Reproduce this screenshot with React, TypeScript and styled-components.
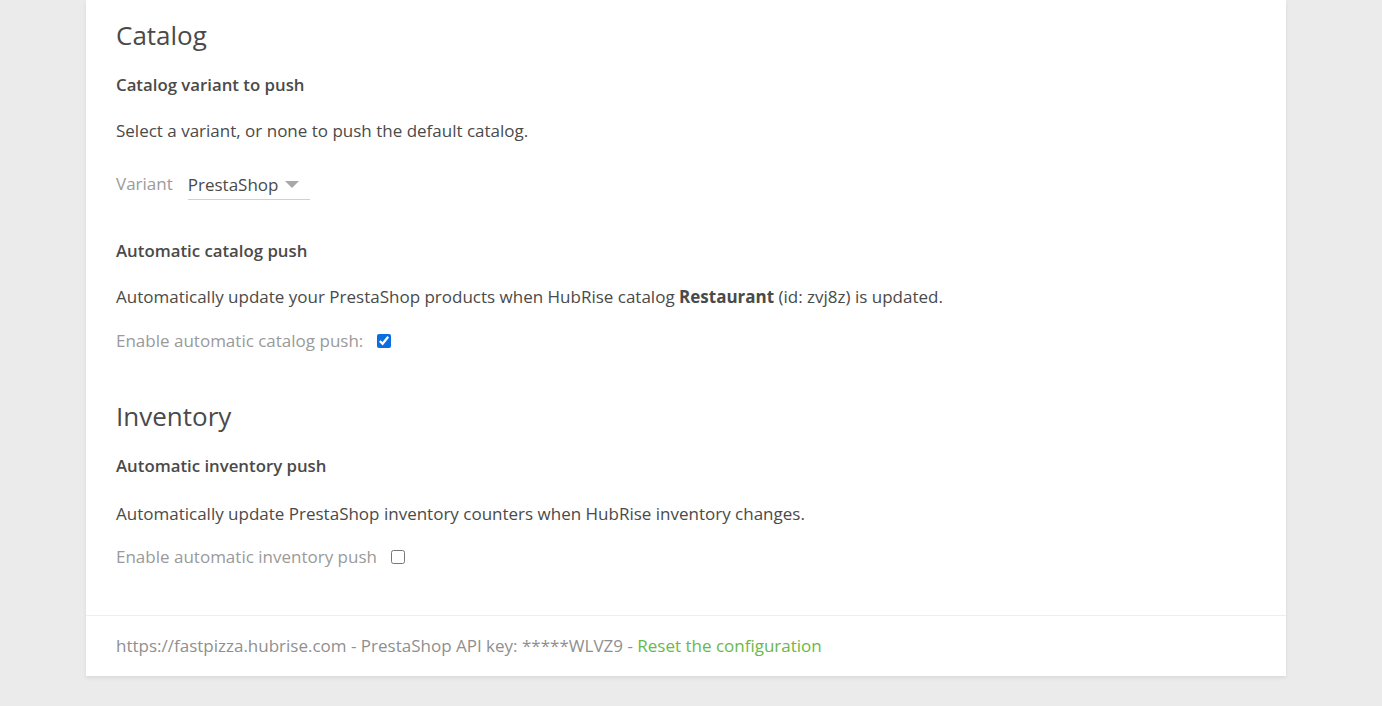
import React from "react";
import styled, { createGlobalStyle } from "styled-components";

const Global = createGlobalStyle`
  html, body { margin: 0; padding: 0; background: #ebebeb; }
  body { font-family: "Open Sans", "Noto Sans", sans-serif; color: #4a4a4a; }
  * { box-sizing: border-box; }
`;

const Page = styled.div`
  display: flex;
  justify-content: center;
  padding: 0 10px 30px 0;
`;

const Card = styled.div`
  width: 1200px;
  background: #fff;
  box-shadow: 0 2px 4px rgba(0, 0, 0, 0.08);
`;

const Body = styled.div`
  padding: 17px 30px 46px;
`;

const Section = styled.section<{ $gap?: number }>`
  margin-top: ${(p) => p.$gap ?? 0}px;
`;

const H2 = styled.h2`
  margin: 0;
  font-size: 26px;
  line-height: 36px;
  font-weight: 500;
  color: #4a4a4a;
`;

const H3 = styled.h3<{ $mt?: number }>`
  margin: ${(p) => p.$mt ?? 20}px 0 0;
  font-size: 16.8px;
  line-height: 24px;
  font-weight: 600;
  color: #4a4a4a;
`;

const P = styled.p<{ $mt?: number }>`
  margin: ${(p) => p.$mt ?? 22}px 0 0;
  font-size: 17px;
  line-height: 24px;
  color: #4a4a4a;
`;

const Row = styled.div<{ $mt?: number }>`
  display: flex;
  align-items: center;
  margin-top: ${(p) => p.$mt ?? 0}px;
  font-size: 17px;
  line-height: 24px;
`;

const Label = styled.span`
  color: #9a9a9a;
`;

const Select = styled.div`
  margin-left: 15px;
  width: 122px;
  height: 32px;
  display: flex;
  align-items: center;
  justify-content: space-between;
  border-bottom: 1px solid #d0d0d0;
  padding-top: 2px;
  color: #4a4a4a;
`;

const Caret = styled.span`
  width: 0;
  height: 0;
  margin-right: 11px;
  border-left: 7px solid transparent;
  border-right: 7px solid transparent;
  border-top: 7px solid #a8a8a8;
`;

const Check = styled.input<{ $ml: number }>`
  width: 14px;
  height: 14px;
  margin: 0 0 0 ${(p) => p.$ml}px;
  accent-color: #0b6ee0;
`;

const Footer = styled.div`
  border-top: 1px solid #eeeeee;
  padding: 19px 30px 19px;
  font-size: 17px;
  line-height: 22px;
  color: #8f8f8f;
`;

const Link = styled.a`
  color: #69b84a;
  text-decoration: none;
`;

export default function App() {
  return (
    <>
      <Global />
      <Page>
        <Card>
          <Body>
            <Section>
              <H2>Catalog</H2>
              <H3>Catalog variant to push</H3>
              <P>Select a variant, or none to push the default catalog.</P>
              <Row $mt={25}>
                <Label>Variant</Label>
                <Select>
                  <span>PrestaShop</span>
                  <Caret />
                </Select>
              </Row>
              <H3 $mt={39}>Automatic catalog push</H3>
              <P>
                Automatically update your PrestaShop products when HubRise catalog{" "}
                <b>Restaurant</b> (id: zvj8z) is updated.
              </P>
              <Row $mt={20}>
                <Label>Enable automatic catalog push:</Label>
                <Check type="checkbox" defaultChecked $ml={14} />
              </Row>
            </Section>
            <Section $gap={45}>
              <H2>Inventory</H2>
              <H3>Automatic inventory push</H3>
              <P $mt={24}>
                Automatically update PrestaShop inventory counters when HubRise inventory changes.
              </P>
              <Row $mt={19}>
                <Label>Enable automatic inventory push</Label>
                <Check type="checkbox" $ml={14} />
              </Row>
            </Section>
          </Body>
          <Footer>
            https://fastpizza.hubrise.com - PrestaShop API key: *****WLVZ9 -{" "}
            <Link href="#">Reset the configuration</Link>
          </Footer>
        </Card>
      </Page>
    </>
  );
}
